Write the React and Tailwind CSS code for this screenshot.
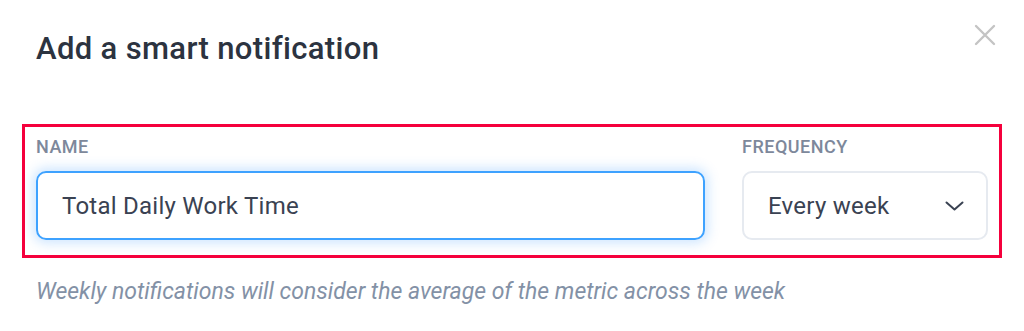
import React from "react";

export default function App() {
  return (
    <div className="w-[1024px] h-[331px] bg-white relative overflow-hidden" style={{ fontFamily: "Roboto, 'Liberation Sans', sans-serif" }}>
      <button className="absolute right-[28px] top-[24px] w-[22px] h-[22px] flex items-center justify-center">
        <svg width="22" height="22" viewBox="0 0 22 22" fill="none" stroke="#c4c4c4" strokeWidth="2.4" strokeLinecap="round">
          <path d="M2 2 L20 20 M20 2 L2 20" />
        </svg>
      </button>
      <div className="px-[36px] pt-[31px]">
        <h2 className="text-[31px] leading-[36px] font-medium text-[#2c3340] tracking-[0.35px]">Add a smart notification</h2>
        <div className="mt-[57px] -mx-[14px] border-[3px] border-[#f5003c] px-[11px] pt-[9px] pb-[15px] flex gap-[37px]">
          <div className="flex-1 flex flex-col">
            <label className="text-[18px] leading-[22px] font-medium text-[#7d889b] tracking-[0.5px]">NAME</label>
            <div className="mt-[13px] h-[69px] rounded-[10px] border-2 border-[#3ea2ff] shadow-[0_0_12px_3px_rgba(90,170,255,0.3)] flex items-center pl-[24px]">
              <span className="text-[24px] text-[#3a4252] tracking-[0.25px]">Total Daily Work Time</span>
            </div>
          </div>
          <div className="w-[246px] flex flex-col">
            <label className="text-[18px] leading-[22px] font-medium text-[#7d889b] tracking-[0.5px]">FREQUENCY</label>
            <div className="mt-[13px] h-[69px] rounded-[10px] border-2 border-[#e6eaf0] flex items-center justify-between pl-[24px] pr-[22px]">
              <span className="text-[24px] text-[#3a4252] tracking-[0.25px]">Every week</span>
              <svg width="19" height="10" viewBox="0 0 19 10" fill="none" stroke="#3a4252" strokeWidth="2" strokeLinecap="round" strokeLinejoin="round">
                <path d="M1.5 1.5 L9.5 8.5 L17.5 1.5" />
              </svg>
            </div>
          </div>
        </div>
        <p className="mt-[20px] text-[23px] leading-[28px] italic text-[#8391a6]">Weekly notifications will consider the average of the metric across the week</p>
      </div>
    </div>
  );
}
